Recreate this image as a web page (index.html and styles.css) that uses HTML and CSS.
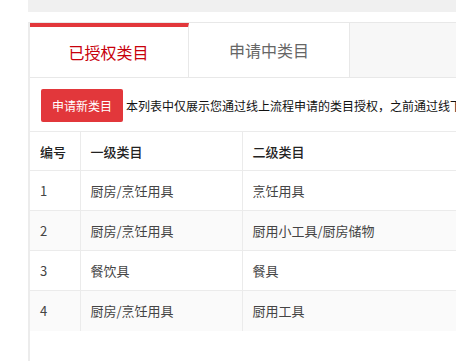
FILE: index.html
```html
<!DOCTYPE html>
<html lang="zh-CN">
<head>
  <meta charset="UTF-8">
  <title>类目授权</title>
  <link rel="stylesheet" href="styles.css">
</head>
<body>

<div class="page">
  <div class="topbar"></div>

  <div class="panel">
    <!-- 标签页 -->
    <div class="tabs">
      <div class="tab active">已授权类目</div>
      <div class="tab">申请中类目</div>
    </div>

    <div class="content">
      <div class="toolbar">
        <button class="btn-red">申请新类目</button>
        <span class="tip">本列表中仅展示您通过线上流程申请的类目授权，之前通过线下申请的类目授权请联系客服查询</span>
      </div>

      <table class="list">
        <thead>
          <tr>
            <th class="col-no">编号</th>
            <th class="col-first">一级类目</th>
            <th>二级类目</th>
          </tr>
        </thead>
        <tbody>
          <tr>
            <td>1</td>
            <td>厨房/烹饪用具</td>
            <td>烹饪用具</td>
          </tr>
          <tr>
            <td>2</td>
            <td>厨房/烹饪用具</td>
            <td>厨用小工具/厨房储物</td>
          </tr>
          <tr>
            <td>3</td>
            <td>餐饮具</td>
            <td>餐具</td>
          </tr>
          <tr>
            <td>4</td>
            <td>厨房/烹饪用具</td>
            <td>厨用工具</td>
          </tr>
        </tbody>
      </table>
    </div>
  </div>
</div>

</body>
</html>
```

FILE: styles.css
```css
* {
  box-sizing: border-box;
}

html,
body {
  height: 100%;
}

body {
  margin: 0;
  background: white;
  font-family: "Microsoft YaHei", "Noto Sans CJK SC", sans-serif;
  color: #333;
  overflow: hidden;
}

.page {
  margin-left: 28px;
  height: 100%;
  display: flex;
  flex-direction: column;
  overflow: hidden;
}

.topbar {
  height: 12px;
  flex-shrink: 0;
  background: #f0f0f0;
}

.panel {
  flex: 1;
  margin-top: 10px;
  border-top: 1px solid #e8e8e8;
  border-left: 2px solid #ececec;
  overflow: hidden;
}

.tabs {
  display: flex;
  height: 55px;
  background: #f7f7f7;
  border-bottom: 1px solid #e8e8e8;
}

.tab {
  width: 161px;
  display: flex;
  justify-content: center;
  align-items: center;
  background: white;
  border-right: 1px solid #e8e8e8;
  font-size: 16px;
  color: #666;
}

.tab.active {
  width: 160px;
  margin-left: -1px;
  border-top: 4px solid #e2373b;
  color: #c8000b;
}

.content {
  padding-top: 11px;
}

.toolbar {
  display: flex;
  align-items: center;
  gap: 3px;
  padding-left: 11px;
  white-space: nowrap;
  overflow: hidden;
}

.btn-red {
  flex-shrink: 0;
  height: 33px;
  padding: 0 11px;
  border: none;
  border-radius: 2px;
  background: #e2373b;
  color: white;
  font-family: inherit;
  font-size: 12px;
}

.tip {
  font-size: 12px;
  color: #111;
  overflow: hidden;
}

.list {
  margin-top: 9px;
  width: 760px;
  border-collapse: collapse;
  font-size: 13px;
}

.list th,
.list td {
  height: 40px;
  padding: 0 10px;
  border: 1px solid #ebebeb;
  border-left: none;
  text-align: left;
}

.list th {
  height: 39px;
  font-weight: 500;
  color: #222;
}

.list td {
  color: #444;
}

.list tbody tr:nth-child(even) {
  background: #fafafa;
}

.list tbody tr:last-child td {
  border-bottom: none;
}

.col-no {
  width: 50px;
}

.col-first {
  width: 162px;
}
```
